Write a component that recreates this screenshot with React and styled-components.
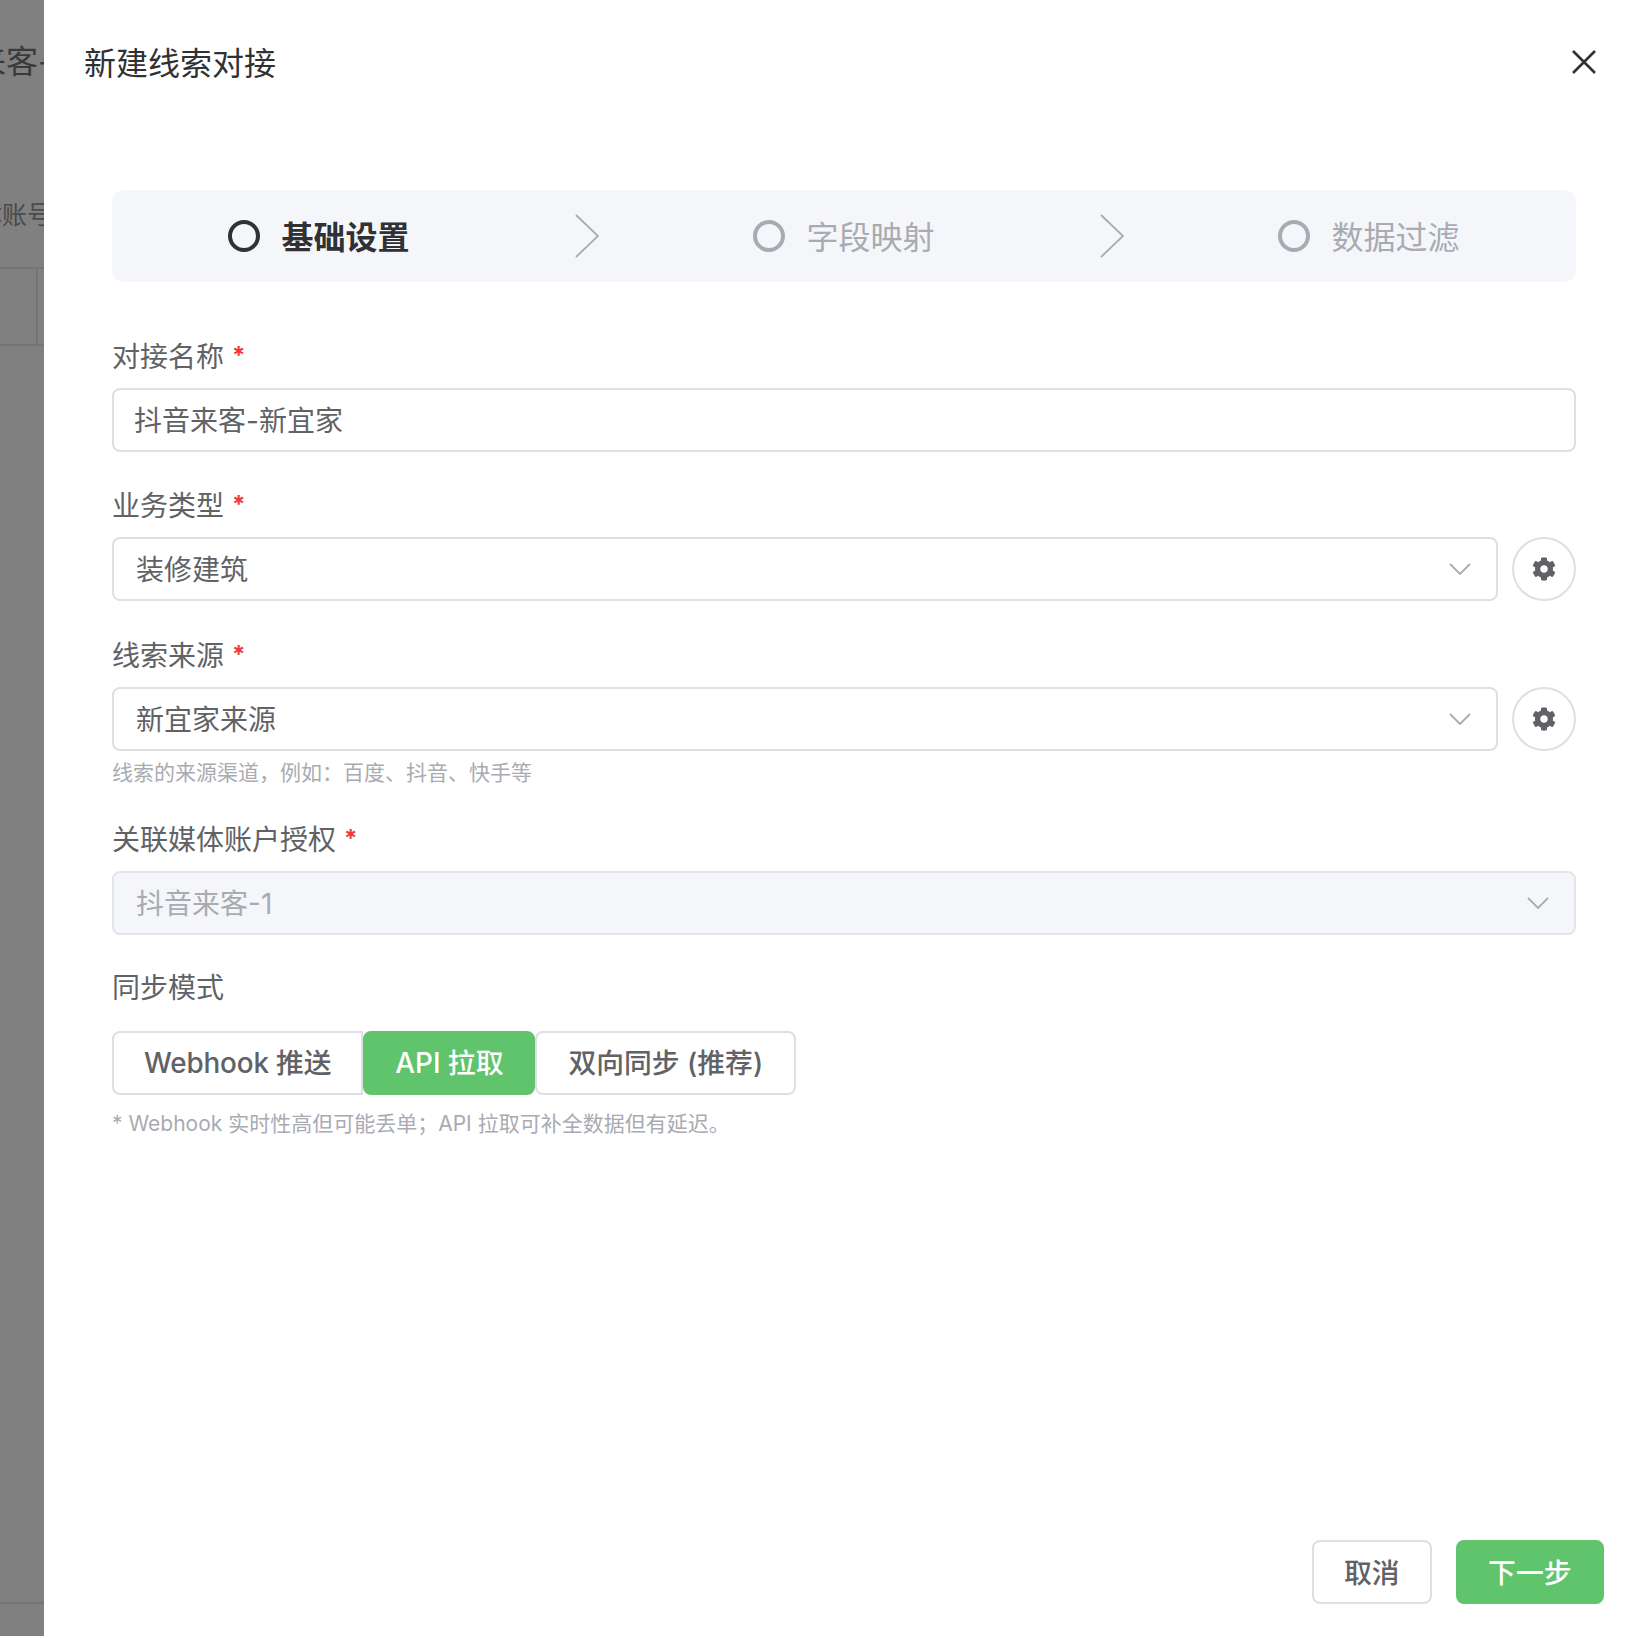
import React from "react";
import styled, { createGlobalStyle } from "styled-components";
import { FaCog } from "react-icons/fa";

const Global = createGlobalStyle`
  html, body { margin: 0; padding: 0; background: #fff; }
  * { box-sizing: border-box; }
  body { font-family: Inter, "Noto Sans CJK SC", sans-serif; }
`;

const Page = styled.div`
  display: flex;
  width: 1628px;
  height: 1636px;
  overflow: hidden;
`;

const Backdrop = styled.aside`
  width: 44px;
  flex: none;
  background: #808080;
  overflow: hidden;
  display: flex;
  flex-direction: column;
  white-space: nowrap;
`;

const BackTitle = styled.div`
  margin: 42px 0 0 -26px;
  height: 40px;
  line-height: 40px;
  font-size: 32px;
  color: #3a3a3a;
`;

const BackLabel = styled.div`
  margin: 121px 0 0 -23px;
  height: 24px;
  line-height: 24px;
  font-size: 25px;
  color: #4a4a4a;
`;

const BackRow = styled.div`
  margin-top: 40px;
  height: 79px;
  border-top: 2px solid #757575;
  border-bottom: 2px solid #757575;
  display: flex;
`;

const BackCell = styled.div`
  width: 38px;
  flex: none;
  border-right: 2px solid #757575;
`;

const BackFooterLine = styled.div`
  margin-top: 1256px;
  height: 2px;
  background: #757575;
`;

const Drawer = styled.main`
  flex: 1;
  min-width: 0;
  display: flex;
  flex-direction: column;
  background: #fff;
`;

const Header = styled.header`
  height: 124px;
  flex: none;
  padding: 0 32px 0 40px;
  display: flex;
  align-items: center;
  justify-content: space-between;
`;

const Title = styled.h1`
  margin: 0 0 3px;
  font-size: 32px;
  font-weight: 400;
  color: #303133;
`;

const Close = styled.button`
  width: 24px;
  height: 24px;
  padding: 0;
  border: 0;
  background: none;
  display: block;
  color: #303133;
`;

const Body = styled.div`
  flex: 1;
  padding: 66px 52px 0 68px;
`;

const Steps = styled.nav`
  height: 92px;
  margin-bottom: 54px;
  padding: 0 1px;
  border-radius: 12px;
  background: #f5f6fa;
  display: flex;
  align-items: center;
`;

const Step = styled.div`
  flex: 1;
  display: flex;
  align-items: center;
  justify-content: center;
  gap: 21px;
  font-size: 32px;
  line-height: 44px;
  font-weight: ${(p) => (p.$active ? 700 : 400)};
  color: ${(p) => (p.$active ? "#303133" : "#a8abb2")};
`;

const StepText = styled.span`
  margin-top: 3px;
`;

const StepDot = styled.span`
  width: 32px;
  height: 32px;
  flex: none;
  border-radius: 50%;
  border: 4px solid currentColor;
`;

const StepArrow = styled.div`
  width: 113px;
  flex: none;
  padding-left: 50px;
  display: flex;
  color: #a8abb2;
`;

const Field = styled.div`
  margin-bottom: ${(p) => p.$gap}px;
`;

const Label = styled.label`
  display: block;
  height: 40px;
  margin-bottom: ${(p) => (p.$wide ? "23px" : "12px")};
  font-size: 28px;
  line-height: 40px;
  color: #606266;
`;

const Star = styled.span`
  margin-left: 8px;
  color: #f0383a;
  font-weight: 700;
  font-size: 24px;
  vertical-align: 3px;
`;

const Control = styled.div`
  height: 64px;
  padding: 0 ${(p) => (p.$select ? "25px" : "20px")} 3px ${(p) => (p.$select ? "22px" : "20px")};
  border: 2px solid ${(p) => (p.$disabled ? "#e4e5eb" : "#dcdfe6")};
  border-radius: 8px;
  background: ${(p) => (p.$disabled ? "#f5f6fa" : "#fff")};
  display: flex;
  align-items: center;
  justify-content: space-between;
  font-size: 28px;
  color: ${(p) => (p.$disabled ? "#a8abb2" : "#606266")};
  ${(p) => (p.$flex ? "flex: 1;" : "")}
`;

const Caret = styled.span`
  display: flex;
  margin-top: 3px;
`;

const SelectRow = styled.div`
  display: flex;
  gap: 14px;
`;

const GearButton = styled.button`
  width: 64px;
  height: 64px;
  flex: none;
  padding: 0;
  border: 2px solid #dcdfe6;
  border-radius: 50%;
  background: #fff;
  color: #606266;
  display: flex;
  align-items: center;
  justify-content: center;
`;

const Hint = styled.div`
  margin-top: ${(p) => (p.$far ? "15px" : "8px")};
  font-size: 21px;
  line-height: 28px;
  color: #a8abb2;
`;

const Segments = styled.div`
  display: flex;
`;

const Segment = styled.button`
  height: 64px;
  padding: 0 ${(p) => p.$pad}px 4px;
  font-family: inherit;
  font-size: 27.8px;
  font-weight: 500;
  letter-spacing: ${(p) => (p.$first ? "-0.15px" : "0")};
  border: 2px solid ${(p) => (p.$on ? "#60c46d" : "#dcdfe6")};
  border-radius: ${(p) => (p.$first ? "8px 0 0 8px" : "8px")};
  background: ${(p) => (p.$on ? "#60c46d" : "#fff")};
  color: ${(p) => (p.$on ? "#fff" : "#606266")};
`;

const Footer = styled.footer`
  flex: none;
  padding: 0 24px 32px;
  display: flex;
  justify-content: flex-end;
  gap: 24px;
`;

const FootButton = styled.button`
  height: 64px;
  padding: 0 ${(p) => (p.$primary ? "30.5px" : "30px")} 2px;
  font-family: inherit;
  font-size: 27.8px;
  font-weight: 500;
  border-radius: 8px;
  border: 2px solid ${(p) => (p.$primary ? "#60c46d" : "#dcdfe6")};
  background: ${(p) => (p.$primary ? "#60c46d" : "#fff")};
  color: ${(p) => (p.$primary ? "#fff" : "#606266")};
`;

const Chevron = () => (
  <svg width="24" height="44" viewBox="0 0 24 44" fill="none" stroke="currentColor" strokeWidth="1.8">
    <path d="M1 1l22 21L1 43" />
  </svg>
);

const Down = () => (
  <Caret>
    <svg width="22" height="12" viewBox="0 0 22 12" fill="none" stroke="#a8abb2" strokeWidth="1.8">
      <path d="M1 1l10 10L21 1" />
    </svg>
  </Caret>
);

const steps = ["基础设置", "字段映射", "数据过滤"];

const Gear = () => (
  <GearButton aria-label="设置">
    <FaCog size={24} />
  </GearButton>
);

export default function App() {
  return (
    <Page>
      <Global />
      <Backdrop>
        <BackTitle>来客-新</BackTitle>
        <BackLabel>体账号</BackLabel>
        <BackRow>
          <BackCell />
        </BackRow>
        <BackFooterLine />
      </Backdrop>
      <Drawer>
        <Header>
          <Title>新建线索对接</Title>
          <Close aria-label="关闭">
            <svg width="24" height="24" viewBox="0 0 24 24" fill="none" stroke="currentColor" strokeWidth="2.6">
              <path d="M1 1l22 22M23 1L1 23" />
            </svg>
          </Close>
        </Header>
        <Body>
          <Steps>
            {steps.map((s, i) => (
              <React.Fragment key={s}>
                <Step $active={i === 0}>
                  <StepDot />
                  <StepText>{s}</StepText>
                </Step>
                {i < 2 && (
                  <StepArrow>
                    <Chevron />
                  </StepArrow>
                )}
              </React.Fragment>
            ))}
          </Steps>

          <Field $gap={33}>
            <Label>对接名称<Star>*</Star></Label>
            <Control>抖音来客-新宜家</Control>
          </Field>

          <Field $gap={34}>
            <Label>业务类型<Star>*</Star></Label>
            <SelectRow>
              <Control $select $flex>装修建筑<Down /></Control>
              <Gear />
            </SelectRow>
          </Field>

          <Field $gap={32}>
            <Label>线索来源<Star>*</Star></Label>
            <SelectRow>
              <Control $select $flex>新宜家来源<Down /></Control>
              <Gear />
            </SelectRow>
            <Hint>线索的来源渠道，例如：百度、抖音、快手等</Hint>
          </Field>

          <Field $gap={33}>
            <Label>关联媒体账户授权<Star>*</Star></Label>
            <Control $select $disabled>抖音来客-1<Down /></Control>
          </Field>

          <Field $gap={0}>
            <Label $wide>同步模式</Label>
            <Segments>
              <Segment $first $pad={30}>Webhook 推送</Segment>
              <Segment $on $pad={30}>API 拉取</Segment>
              <Segment $pad={31}>双向同步 (推荐)</Segment>
            </Segments>
            <Hint $far>* Webhook 实时性高但可能丢单；API 拉取可补全数据但有延迟。</Hint>
          </Field>
        </Body>
        <Footer>
          <FootButton>取消</FootButton>
          <FootButton $primary>下一步</FootButton>
        </Footer>
      </Drawer>
    </Page>
  );
}
